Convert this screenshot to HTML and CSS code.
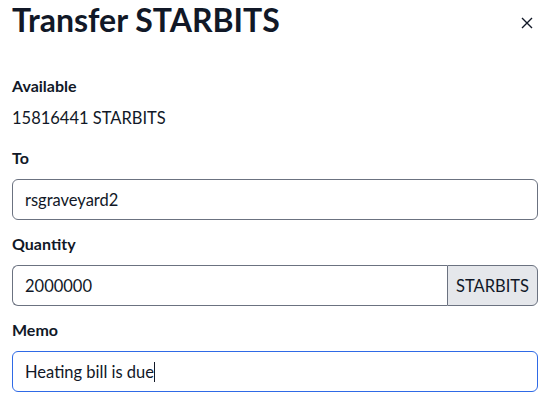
FILE: index.html
```html
<!DOCTYPE html>
<html lang="en">
<head>
  <meta charset="UTF-8" />
  <meta name="viewport" content="width=device-width, initial-scale=1.0"/>
  <title>Transfer STARBITS</title>
  <link rel="stylesheet" href="styles.css">
</head>
<body>

  <div class="modal">
    <div class="modal-header">
      <h1>Transfer STARBITS</h1>
      <button class="close" aria-label="Close">
        <svg width="12" height="12" viewBox="0 0 12 12">
          <path d="M1 1 L11 11 M11 1 L1 11" stroke="#111827" stroke-width="1.4" fill="none"/>
        </svg>
      </button>
    </div>

    <div class="modal-body">
      <div class="field available">
        <div class="label">Available</div>
        <div class="value">15816441 STARBITS</div>
      </div>

      <div class="field">
        <label class="label" for="to">To</label>
        <input class="input" id="to" type="text" value="rsgraveyard2">
      </div>

      <div class="field">
        <label class="label" for="qty">Quantity</label>
        <div class="input-group">
          <input class="input" id="qty" type="text" value="2000000">
          <span class="addon">STARBITS</span>
        </div>
      </div>

      <div class="field">
        <label class="label">Memo</label>
        <div class="input focused">Heating bill is due<span class="caret"></span></div>
      </div>
    </div>
  </div>

</body>
</html>
```

FILE: styles.css
```css
body {
  font-family: 'Lato', 'Noto Sans', sans-serif;
  margin: 0;
  background: #ffffff;
  color: #111827;
}

.modal {
  padding: 0 19px 0 12px;
}

.modal-header {
  display: flex;
  align-items: flex-start;
  justify-content: space-between;
  height: 39px;
  margin-bottom: 35px;
}

h1 {
  margin: 0;
  font-size: 32px;
  font-weight: 700;
  color: #111827;
}

.close {
  background: none;
  border: none;
  padding: 0;
  margin-top: 17px;
  margin-right: 5px;
  width: 12px;
  height: 12px;
  cursor: pointer;
  display: flex;
}

.modal-body {
  display: flex;
  flex-direction: column;
  gap: 12px;
}

.field {
  display: flex;
  flex-direction: column;
  gap: 9px;
}

.available {
  gap: 8px;
  margin-bottom: 4px;
}

.label {
  font-size: 16px;
  font-weight: 700;
  line-height: 24px;
}

.value {
  font-size: 16.5px;
  line-height: 24px;
}

.input {
  box-sizing: border-box;
  width: 100%;
  height: 41px;
  padding: 0 12px;
  border: 1px solid #6b7280;
  border-radius: 6px;
  font-family: inherit;
  font-size: 16.5px;
  color: #111827;
  background: #fff;
  display: flex;
  align-items: center;
  outline: none;
}

.focused {
  border-color: #2f6ae6;
}

.caret {
  display: inline-block;
  width: 1px;
  height: 20px;
  background: #111827;
}

.input-group {
  display: flex;
}

.input-group .input {
  border-radius: 6px 0 0 6px;
  border-right: none;
  flex: 1;
}

.addon {
  box-sizing: border-box;
  height: 41px;
  display: flex;
  align-items: center;
  padding: 0 8px;
  background: #e5e7eb;
  border: 1px solid #6b7280;
  border-radius: 0 6px 6px 0;
  font-size: 16.5px;
  color: #111827;
}
```
